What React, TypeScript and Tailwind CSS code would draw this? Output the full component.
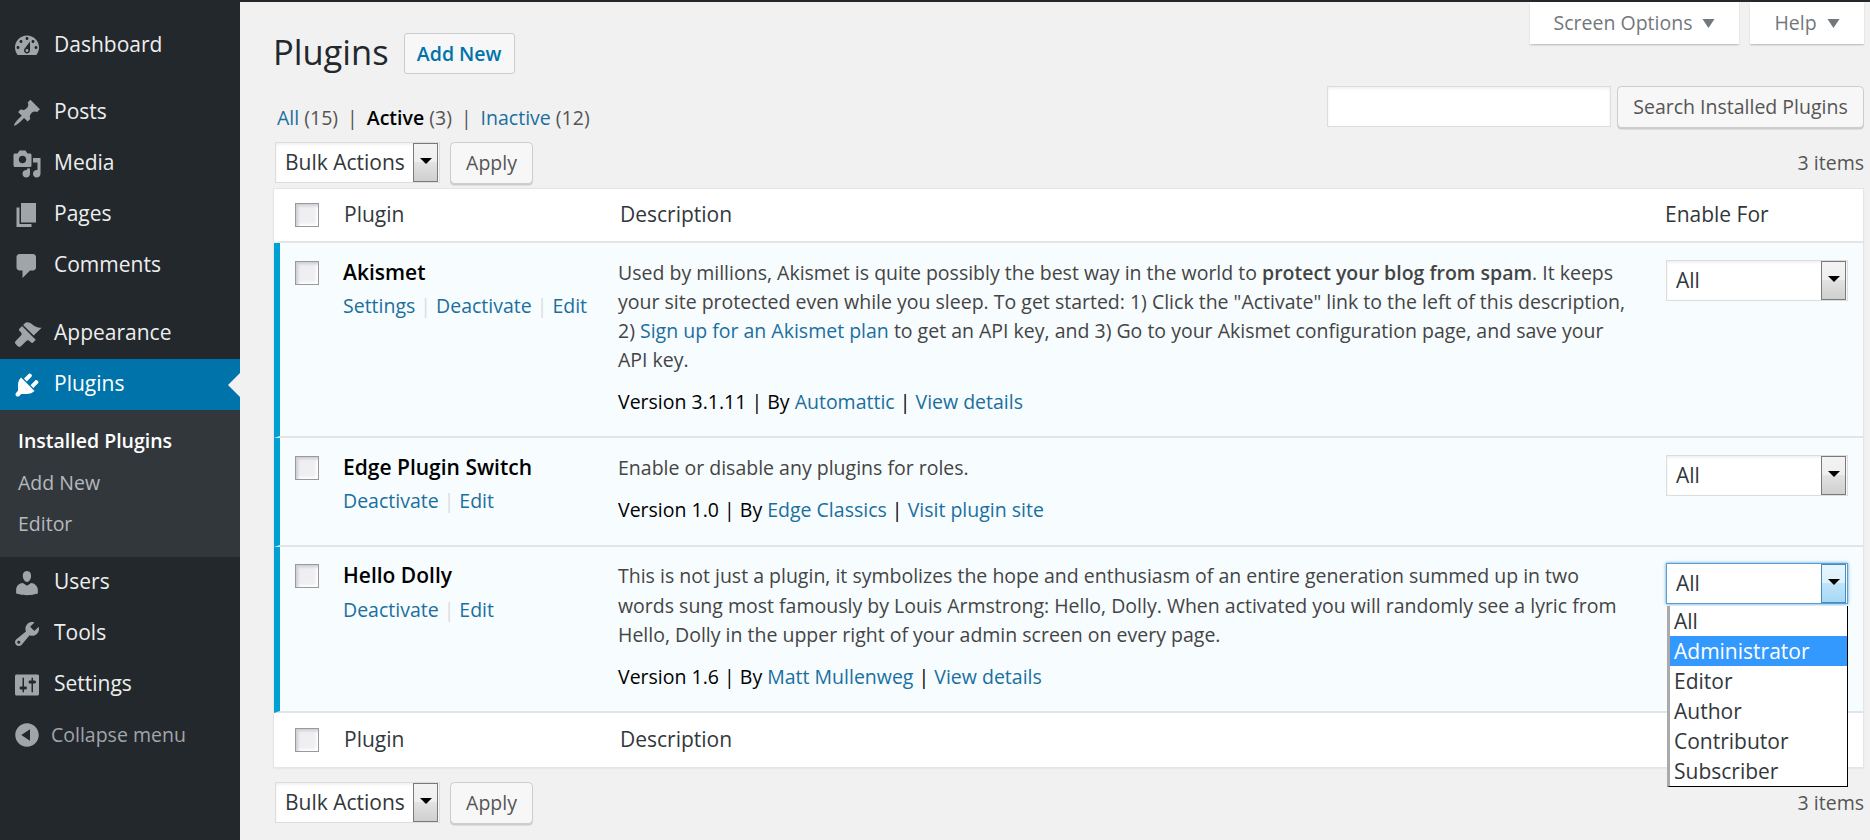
import React from "react";

const Dash = ({ d, className = "w-[30px] h-[30px]" }: { d: string; className?: string }) => (
  <svg viewBox="0 0 20 20" className={className} fill="currentColor">
    <path d={d} />
  </svg>
);

const icons = {
  dashboard:
    "M3.76 16h12.48c1.1-1.37 1.76-3.11 1.76-5 0-4.42-3.58-8-8-8s-8 3.58-8 8c0 1.89.66 3.63 1.76 5zM10 4c.55 0 1 .45 1 1s-.45 1-1 1-1-.45-1-1 .45-1 1-1zM6 6c.55 0 1 .45 1 1s-.45 1-1 1-1-.45-1-1 .45-1 1-1zm8 0c.55 0 1 .45 1 1s-.45 1-1 1-1-.45-1-1 .45-1 1-1zm-5.37 5.55L12 7v6c0 1.1-.9 2-2 2s-2-.9-2-2c0-.57.24-1.08.63-1.45zM4 10c.55 0 1 .45 1 1s-.45 1-1 1-1-.45-1-1 .45-1 1-1zm12 0c.55 0 1 .45 1 1s-.45 1-1 1-1-.45-1-1 .45-1 1-1zm-5 3c0-.55-.45-1-1-1s-1 .45-1 1 .45 1 1 1 1-.45 1-1z",
  post: "M10.44 3.02l1.82-1.82 6.36 6.35-1.83 1.82c-1.05-.68-2.48-.57-3.41.36l-.75.75c-.92.93-1.04 2.35-.35 3.41l-1.83 1.82-2.41-2.41-2.8 2.79c-.42.42-3.38 2.71-3.8 2.29s1.86-3.39 2.28-3.81l2.79-2.79L4.1 9.36l1.83-1.82c1.05.69 2.48.57 3.4-.36l.75-.75c.93-.92 1.05-2.35.36-3.41z",
  media:
    "M13 11V4c0-.55-.45-1-1-1h-1.67L9 1H5L3.67 3H2c-.55 0-1 .45-1 1v7c0 .55.45 1 1 1h10c.55 0 1-.45 1-1zM7 4.5c1.38 0 2.5 1.12 2.5 2.5S8.38 9.5 7 9.5 4.5 8.38 4.5 7 5.62 4.5 7 4.5zM14 6h5v10.5c0 1.38-1.12 2.5-2.5 2.5S14 17.88 14 16.5s1.12-2.5 2.5-2.5c.17 0 .34.02.5.05V9h-3V6zm-4 8.05V13h2v3.5c0 1.38-1.12 2.5-2.5 2.5S7 17.88 7 16.5 8.12 14 9.5 14c.17 0 .34.02.5.05z",
  page: "M6 15V2h10v13H6zm-1 1h8v2H3V5h2v11z",
  comment: "M5 2h9c1.1 0 2 .9 2 2v7c0 1.1-.9 2-2 2h-2l-5 5v-5H5c-1.1 0-2-.9-2-2V4c0-1.1.9-2 2-2z",
  appearance:
    "M14.48 11.06L7.41 3.99l1.5-1.5c.5-.56 2.3-.47 3.51.32 1.21.8 1.43 1.28 2.91 2.1 1.18.64 2.45 1.26 4.45.85zm-.71.71L6.7 4.7 4.93 6.47c-.39.39-.39 1.02 0 1.41l1.06 1.06c.59.59.59 1.54 0 2.12l-3.53 3.53c-.59.59-.59 1.54 0 2.12l1.41 1.41c.59.59 1.54.59 2.12 0l3.53-3.53c.59-.59 1.54-.59 2.12 0l1.06 1.06c.39.39 1.02.39 1.41 0l1.74-1.75z",
  plugin:
    "M13.11 4.36L9.87 7.6 8 5.73l3.24-3.24c.35-.34 1.05-.2 1.56.32.52.51.66 1.21.31 1.55zm-8 1.77l.91-1.12 9.01 9.01-1.19.84c-.71.71-2.63 1.16-3.82 1.16H6.14L4.9 17.26c-.59.59-1.54.59-2.12 0-.59-.58-.59-1.53 0-2.12l1.24-1.24v-3.88c0-1.13.4-3.19 1.09-3.89zm7.26 3.97l3.24-3.24c.34-.35 1.04-.21 1.55.31.52.51.66 1.21.31 1.55l-3.24 3.25z",
  users:
    "M10 9.25c-2.27 0-2.73-3.44-2.73-3.44C7 4.02 7.82 2 9.97 2c2.16 0 2.98 2.02 2.71 3.81 0 0-.41 3.44-2.68 3.44zm0 2.57L12.72 10c2.39 0 4.52 2.33 4.52 4.53v2.49s-3.65 1.13-7.24 1.13c-3.65 0-7.24-1.13-7.24-1.13v-2.49c0-2.25 1.94-4.48 4.47-4.48z",
  tools:
    "M16.68 9.77c-1.34 1.34-3.3 1.67-4.95.99l-5.41 6.52c-.99.99-2.59.99-3.58 0s-.99-2.59 0-3.57l6.52-5.42c-.68-1.65-.35-3.61.99-4.95 1.28-1.28 3.12-1.62 4.72-1.06l-2.89 2.89 2.82 2.82 2.86-2.87c.53 1.58.18 3.39-1.08 4.65zM3.81 16.21c.4.39 1.04.39 1.43 0 .4-.4.4-1.04 0-1.43-.39-.4-1.03-.4-1.43 0-.39.39-.39 1.03 0 1.43z",
  settings:
    "M18 16V4c0-.55-.45-1-1-1H3c-.55 0-1 .45-1 1v12c0 .55.45 1 1 1h14c.55 0 1-.45 1-1zM8 11h1c.55 0 1 .45 1 1s-.45 1-1 1H8v1.5c0 .28-.22.5-.5.5s-.5-.22-.5-.5V13H6c-.55 0-1-.45-1-1s.45-1 1-1h1V5.5c0-.28.22-.5.5-.5s.5.22.5.5V11zm5-2h-1c-.55 0-1-.45-1-1s.45-1 1-1h1V5.5c0-.28.22-.5.5-.5s.5.22.5.5V7h1c.55 0 1 .45 1 1s-.45 1-1 1h-1v5.5c0 .28-.22.5-.5.5s-.5-.22-.5-.5V9z",
  collapse: "M10 2.16c4.33 0 7.84 3.51 7.84 7.84s-3.51 7.84-7.84 7.84S2.16 14.33 2.16 10 5.71 2.16 10 2.16zm2 11.72V6.12L6.18 9.97z",
  down: "M15 8l-4.03 6L7 8h8z",
};

const MenuItem = ({ icon, label, active }: { icon: string; label: string; active?: boolean }) => (
  <div className={`relative flex h-[51px] items-center text-[21px] ${active ? "bg-[#0073aa] text-white" : "text-[#eeeeee]"}`}>
    <span className={`ml-[12px] mr-[12px] ${active ? "text-white" : "text-[#a0a5aa]"}`}>
      <Dash d={icon} />
    </span>
    <span className="-mt-[1px]">{label}</span>
    {active && (
      <span className="absolute right-0 top-1/2 -mt-[12px] h-0 w-0 border-y-[12px] border-r-[12px] border-y-transparent border-r-[#f1f1f1]" />
    )}
  </div>
);

const Sidebar = () => (
  <aside className="w-[240px] shrink-0 bg-[#23282d] pt-[18px]">
    <MenuItem icon={icons.dashboard} label="Dashboard" />
    <div className="h-[16px]" />
    <MenuItem icon={icons.post} label="Posts" />
    <MenuItem icon={icons.media} label="Media" />
    <MenuItem icon={icons.page} label="Pages" />
    <MenuItem icon={icons.comment} label="Comments" />
    <div className="h-[17px]" />
    <MenuItem icon={icons.appearance} label="Appearance" />
    <MenuItem icon={icons.plugin} label="Plugins" active />
    <div className="h-[147px] bg-[#32373c] pl-[18px] pt-[10px] text-[19.5px]">
      <div className="flex h-[41.5px] items-center font-semibold text-white">Installed Plugins</div>
      <div className="flex h-[41.5px] items-center text-[#b4b9be]">Add New</div>
      <div className="flex h-[41.5px] items-center text-[#b4b9be]">Editor</div>
    </div>
    <MenuItem icon={icons.users} label="Users" />
    <MenuItem icon={icons.tools} label="Tools" />
    <MenuItem icon={icons.settings} label="Settings" />
    <div className="flex h-[49px] items-center text-[19.5px] text-[#a0a5aa]">
      <span className="ml-[12px] mr-[9px]">
        <Dash d={icons.collapse} />
      </span>
      Collapse menu
    </div>
  </aside>
);

const Arrow = () => <span className="-mt-[3px] h-0 w-0 border-x-[6px] border-t-[6px] border-x-transparent border-t-black" />;

const Select = ({ label, width, focus }: { label: string; width: string; focus?: boolean }) => (
  <div
    className={`flex h-[41px] items-stretch bg-white text-[21px] text-[#32373c] ${width} ${
      focus ? "border border-[#5b9dd9] shadow-[0_0_3px_rgba(30,140,190,.8)]" : "border border-[#dddddd] shadow-[inset_0_1.5px_3px_rgba(0,0,0,.07)]"
    }`}
  >
    <span className="flex-1 pl-[9px] leading-[39px]">{label}</span>
    <span
      className={`mr-[1px] flex w-[25px] items-center justify-center border-[1.5px] ${
        focus
          ? "border-[#4a8ab5] bg-[linear-gradient(#e6f6fe_0%,#dcf1fc_50%,#bfe3f9_50%,#a6d8f5_100%)]"
          : "border-[#7a7a7a] bg-[linear-gradient(#f3f3f3_0%,#eeeeee_50%,#e2e2e2_50%,#cfcfcf_100%)]"
      }`}
    >
      <Arrow />
    </span>
  </div>
);

const Button = ({ children, className = "" }: { children: React.ReactNode; className?: string }) => (
  <div
    className={`flex h-[42px] items-center justify-center rounded-[4.5px] border border-[#cccccc] bg-[#f7f7f7] text-[19.5px] text-[#555555] shadow-[0_1.5px_0_#cccccc] ${className}`}
  >
    <span className="-mt-[1px]">{children}</span>
  </div>
);

const Check = () => (
  <span className="block h-[24px] w-[24px] border-[1.5px] border-[#999999] bg-[#efeff1] shadow-[inset_2px_2px_3px_#cdcdd4,inset_-2px_-2px_3px_#ffffff]" />
);

const Link = ({ children }: { children: React.ReactNode }) => <span className="text-[#1a6f9f]">{children}</span>;
const Pipe = () => <span className="mx-[5px] text-[#dddddd]">|</span>;

const Tablenav = () => (
  <div className="flex items-start justify-between">
    <div className="ml-[2px] flex gap-[10px]">
      <Select label="Bulk Actions" width="w-[165px]" />
      <Button className="w-[83px]">Apply</Button>
    </div>
    <span className="text-[19.5px] leading-[42px] text-[#555555]">3 items</span>
  </div>
);

const HeadRow = ({ foot }: { foot?: boolean }) => (
  <div className={`flex h-[54px] items-center border-l-[6px] border-white text-[21px] text-[#32373c] ${foot ? "" : "border-b-2 border-b-[#e5e5e5]"}`}>
    <div className="w-[63px] pl-[15px]">
      <Check />
    </div>
    <div className="w-[276px] pl-[1px]">Plugin</div>
    <div className="w-[1046px] pl-[1px]">Description</div>
    {!foot && <div>Enable For</div>}
  </div>
);

const Row = ({
  name,
  actions,
  desc,
  meta,
  pb,
  focus,
}: {
  name: string;
  actions: string[];
  desc: React.ReactNode;
  meta: React.ReactNode;
  pb: string;
  focus?: boolean;
}) => (
  <div className={`flex border-b-2 border-l-[6px] border-b-[#e1e5e8] border-l-[#00a0d2] bg-[#f7fcfe] pt-[14.5px] text-[19.5px] leading-[29.25px] ${pb}`}>
    <div className="w-[63px] shrink-0 pl-[15px] pt-[3px]">
      <Check />
    </div>
    <div className="w-[275px] shrink-0">
      <div className="text-[21px] font-semibold text-black">{name}</div>
      <div className="mt-[4px]">
        {actions.map((a, i) => (
          <React.Fragment key={a}>
            {i > 0 && <Pipe />}
            <Link>{a}</Link>
          </React.Fragment>
        ))}
      </div>
    </div>
    <div className="w-[1012px] shrink-0 text-[#444444]">
      <p>{desc}</p>
      <p className="mt-[12.5px] text-black">{meta}</p>
    </div>
    <div className="ml-[36px] mt-[2px] w-[182px] shrink-0">
      <Select label="All" width="w-[182px]" focus={focus} />
    </div>
  </div>
);

const Dropdown = () => (
  <div className="absolute right-[22px] top-[604px] z-10 w-[181px] border-b border-l-[3px] border-r border-b-black border-l-[#aaaaaa] border-r-black bg-white text-[21px] leading-[30px] text-[#32373c]">
    <div className="pl-[4px]">All</div>
    <div className="bg-[#3399ff] pl-[4px] text-white">Administrator</div>
    <div className="pl-[4px]">Editor</div>
    <div className="pl-[4px]">Author</div>
    <div className="pl-[4px]">Contributor</div>
    <div className="pl-[4px]">Subscriber</div>
  </div>
);

export default function App() {
  return (
    <div className="relative flex h-[840px] w-[1870px] overflow-hidden border-t-2 border-[#23282d] bg-[#f1f1f1] font-['Open_Sans',sans-serif]">
      <Sidebar />
      <main className="min-w-0 flex-1 pl-[33px] pr-[6px]">
        <div className="flex h-[84px] items-start justify-between">
          <div className="mt-[31px] flex items-center gap-[15px]">
            <h1 className="mb-[4px] text-[34.5px] leading-[36px] text-[#23282d]">Plugins</h1>
            <div className="flex h-[41px] w-[111px] items-center justify-center rounded-[3px] border border-[#cccccc] bg-[#f7f7f7] text-[19.5px] font-semibold text-[#0073aa]">
              Add New
            </div>
          </div>
          <div className="flex gap-[11px] text-[19.5px] text-[#72777c]">
            <div className="flex h-[42px] w-[209px] items-center justify-center bg-white shadow-[0_1.5px_1.5px_rgba(0,0,0,.18)]">
              Screen Options
              <Dash d={icons.down} className="-mr-[7px] -mt-[3px] h-[30px] w-[30px]" />
            </div>
            <div className="flex h-[42px] w-[114px] items-center justify-center bg-white shadow-[0_1.5px_1.5px_rgba(0,0,0,.18)]">
              Help
              <Dash d={icons.down} className="-mr-[7px] -mt-[3px] h-[30px] w-[30px]" />
            </div>
          </div>
        </div>
        <div className="flex h-[56px] items-start justify-between">
          <div className="ml-[4px] pt-[17px] text-[19.5px] leading-[29px] text-[#555555]">
            <Link>All</Link> (15)<span className="mx-[9px]">|</span>
            <span className="font-semibold text-black">Active</span> (3)<span className="mx-[9px]">|</span>
            <Link>Inactive</Link> (12)
          </div>
          <div className="flex gap-[6px]">
            <div className="h-[41px] w-[284px] border border-[#dddddd] bg-white shadow-[inset_0_1.5px_3px_rgba(0,0,0,.07)]" />
            <Button className="w-[247px]">Search Installed Plugins</Button>
          </div>
        </div>
        <Tablenav />
        <div className="mt-[4px] border border-[#e5e5e5] bg-white shadow-[0_1.5px_1.5px_rgba(0,0,0,.04)]">
          <HeadRow />
          <Row
            name="Akismet"
            actions={["Settings", "Deactivate", "Edit"]}
            pb="pb-[20px]"
            desc={
              <>
                Used by millions, Akismet is quite possibly the best way in the world to{" "}
                <strong className="font-semibold">protect your blog from spam</strong>. It keeps your site protected even while you sleep. To get started: 1) Click the "Activate" link to the left of this description, 2){" "}
                <Link>Sign up for an Akismet plan</Link> to get an API key, and 3) Go to your Akismet configuration page, and save your API key.
              </>
            }
            meta={
              <>
                Version 3.1.11 | By <Link>Automattic</Link> | <Link>View details</Link>
              </>
            }
          />
          <Row
            name="Edge Plugin Switch"
            actions={["Deactivate", "Edit"]}
            pb="pb-[21px]"
            desc="Enable or disable any plugins for roles."
            meta={
              <>
                Version 1.0 | By <Link>Edge Classics</Link> | <Link>Visit plugin site</Link>
              </>
            }
          />
          <Row
            name="Hello Dolly"
            actions={["Deactivate", "Edit"]}
            pb="pb-[20px]"
            focus
            desc="This is not just a plugin, it symbolizes the hope and enthusiasm of an entire generation summed up in two words sung most famously by Louis Armstrong: Hello, Dolly. When activated you will randomly see a lyric from Hello, Dolly in the upper right of your admin screen on every page."
            meta={
              <>
                Version 1.6 | By <Link>Matt Mullenweg</Link> | <Link>View details</Link>
              </>
            }
          />
          <HeadRow foot />
        </div>
        <div className="mt-[14px]">
          <Tablenav />
        </div>
      </main>
      <Dropdown />
    </div>
  );
}
